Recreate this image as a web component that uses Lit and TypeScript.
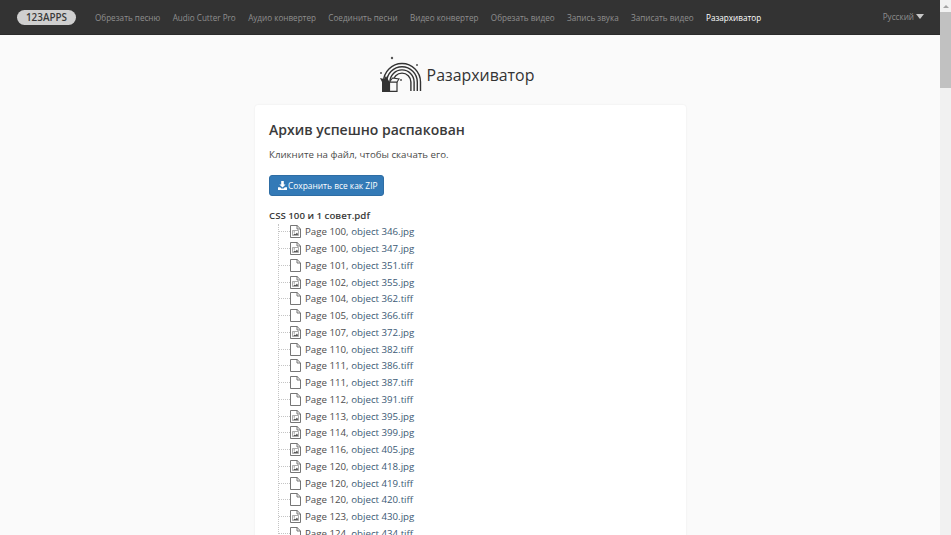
import { LitElement, html, css, svg } from "lit";
import { customElement } from "lit/decorators.js";

const NAV = ["Обрезать песню", "Audio Cutter Pro", "Аудио конвертер", "Соединить песни", "Видео конвертер", "Обрезать видео", "Запись звука", "Записать видео"];
const FILES: [string, string, boolean][] = [
  ["Page 100,", "object 346.jpg", true], ["Page 100,", "object 347.jpg", true], ["Page 101,", "object 351.tiff", false],
  ["Page 102,", "object 355.jpg", true], ["Page 104,", "object 362.tiff", false], ["Page 105,", "object 366.tiff", false],
  ["Page 107,", "object 372.jpg", true], ["Page 110,", "object 382.tiff", false], ["Page 111,", "object 386.tiff", false],
  ["Page 111,", "object 387.tiff", false], ["Page 112,", "object 391.tiff", false], ["Page 113,", "object 395.jpg", true],
  ["Page 114,", "object 399.jpg", true], ["Page 116,", "object 405.jpg", true], ["Page 120,", "object 418.jpg", true],
  ["Page 120,", "object 419.tiff", false], ["Page 120,", "object 420.tiff", false], ["Page 123,", "object 430.jpg", true],
  ["Page 124,", "object 434.tiff", false],
];

const fileIcon = (img: boolean) => html`<svg class="ficon" viewBox="0 0 11 13" width="11" height="13">
  <path d="M.5.5h6.6l3.4 3.4v8.6H.5z M7 .5v3.5h3.5" fill="#fff" stroke="#666" stroke-width=".9"/>
  ${img ? svg`<path d="M2.5 5.5h6v5h-6z" fill="none" stroke="#888" stroke-width=".7"/><path d="M3.2 10l1.4-1.6 .9.8L7 7.6l.9 1.3V10z" fill="#555"/><circle cx="4.2" cy="6.9" r=".6" fill="#666"/>` : ""}
</svg>`;

@customElement("app-root")
export class AppRoot extends LitElement {
  static styles = css`
    :host { display: flex; height: 535px; overflow: hidden; font-family: "Open Sans", sans-serif; color: #333; background: #fafafa; }
    .main { flex: 1; min-width: 0; display: flex; flex-direction: column; }
    nav { height: 34px; flex: none; background: #333; display: flex; align-items: center; padding: 0 16px 0 17px; font-size: 8.15px; color: #8f8f8f; box-shadow: 0 1px 0 #2b2b2b; }
    .brand { width: 59px; height: 15px; border-radius: 8px; background: #cfcfcf; color: #3a3a3a; font: 600 9.9px/15px "Open Sans", sans-serif; text-align: center; margin-right: 19px; }
    .links { display: flex; gap: 12.4px; white-space: nowrap; }
    .active { color: #fff; font-weight: 500; }
    .lang { margin-left: auto; display: flex; align-items: center; gap: 2px; margin-top: -2px; }
    .tri { width: 0; height: 0; border-left: 4.5px solid transparent; border-right: 4.5px solid transparent; border-top: 5px solid #c8c8c8; }
    .logo { height: 71px; flex: none; box-sizing: border-box; padding: 10px 27px 0 0; display: flex; align-items: center; justify-content: center; gap: 4px; font-size: 15.9px; font-weight: 500; color: #333; }
    .card { width: 431px; margin: 0 0 0 255px; flex: 1; box-sizing: border-box; background: #fff; border-radius: 3px; box-shadow: 0 0 2px rgba(0,0,0,.08); padding: 14px 14px 0; }
    h1 { margin: 0; font-size: 14px; font-weight: 600; line-height: 22px; color: #3a3a3a; }
    p { margin: 5px 0 0; color: #4a4a4a; font-size: 9.7px; line-height: 17px; }
    button { display: flex; align-items: center; gap: 1px; height: 21px; width: 115px; margin-top: 12px; padding: 0 0 0 8px; border: 1px solid #2e6da4; border-radius: 3px; background: #337ab7; color: #fff; font: 500 8.4px "Open Sans", sans-serif; white-space: nowrap; box-sizing: border-box; }
    .root-name { margin-top: 11.5px; font-weight: 600; color: #3a3a3a; font-size: 9.7px; line-height: 16px; }
    ul { list-style: none; margin: 0 0 0 9px; padding: 0; border-left: 1px dotted #c4c4c4; }
    li { display: flex; align-items: center; height: 16.76px; white-space: nowrap; font-size: 9.7px; color: #4d4d4d; }
    .dash { width: 11px; border-top: 1px dotted #c4c4c4; flex: none; }
    .ficon { flex: none; margin-right: 4px; }
    .obj { color: #3b5a75; margin-left: 2.7px; }
    .sb { width: 11px; flex: none; background: #f1f1f1; display: flex; flex-direction: column; }
    .up { height: 12px; display: flex; align-items: center; justify-content: center; }
    .up i { width: 0; height: 0; border-left: 3px solid transparent; border-right: 3px solid transparent; border-bottom: 3px solid #a3a3a3; }
    .thumb { height: 76px; background: #c1c1c1; }
  `;

  render() {
    return html`
      <div class="main">
        <nav>
          <div class="brand">123APPS</div>
          <div class="links">${NAV.map((n) => html`<span>${n}</span>`)}<span class="active">Разархиватор</span></div>
          <div class="lang">Русский <span class="tri"></span></div>
        </nav>
        <div class="logo">
          <svg width="44" height="38" viewBox="0 0 44 38" fill="none">
            <g stroke="#333" stroke-width="1.4">
              <path d="M4.5 26a18.5 18.5 0 0 1 37 0v9"/>
              <path d="M7.7 26a15.3 15.3 0 0 1 30.6 0v9"/>
              <path d="M10.9 26a12.1 12.1 0 0 1 24.2 0v9"/>
              <path d="M14.1 26a8.9 8.9 0 0 1 17.8 0v9"/>
            </g>
            <path d="M3 25h15v11H3z" fill="#fafafa"/>
            <path d="M3 26h7.5v10H3z" fill="#333"/>
            <path d="M10.5 26H18v9.4h-7.5z" fill="#fafafa" stroke="#333" stroke-width="1.2"/>
            <path d="M3 26l-2-4 4 1 2-3 3.5 6z" fill="#333"/>
            <path d="M10.5 26l3-4 6.5 1-2 3z" fill="#fafafa" stroke="#333" stroke-width="1.1"/>
            <circle cx="13" cy="2" r="1.2" fill="#555"/><circle cx="38" cy="9" r="1" fill="#555"/><circle cx="2" cy="17" r="1" fill="#555"/><circle cx="22" cy="24" r="1" fill="#555"/>
          </svg>
          <span>Разархиватор</span>
        </div>
        <div class="card">
          <h1>Архив успешно распакован</h1>
          <p>Кликните на файл, чтобы скачать его.</p>
          <button>
            <svg width="9" height="9" viewBox="0 0 9 9"><path d="M3.2 0h2.6v3.4h1.8L4.5 6.6 1.4 3.4h1.8zM0 6.2h2.2l1.2 1.2h2.2l1.2-1.2H9V9H0z" fill="#fff"/></svg>
            Сохранить все как ZIP
          </button>
          <div class="root-name">CSS 100 и 1 совет.pdf</div>
          <ul>
            ${FILES.map(([a, b, img]) => html`<li><span class="dash"></span>${fileIcon(img)}<span>${a}</span><span class="obj">${b}</span></li>`)}
          </ul>
        </div>
      </div>
      <div class="sb"><div class="up"><i></i></div><div class="thumb"></div></div>
    `;
  }
}
